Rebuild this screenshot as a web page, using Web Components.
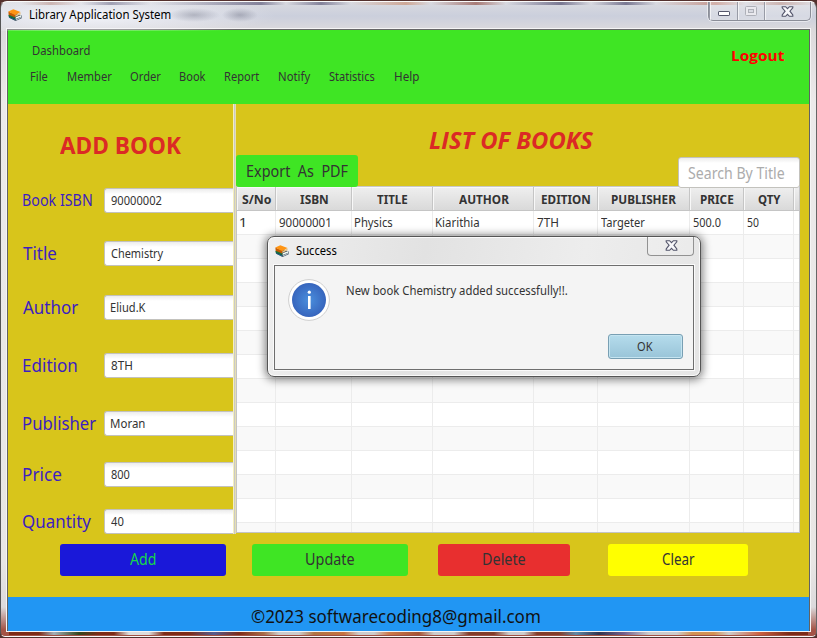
<!DOCTYPE html>
<html lang="en"><head><meta charset="utf-8"><title>Library Application System</title>
<style>
html,body{margin:0;width:817px;height:638px;overflow:hidden;background:#7b7068}
body{font-family:"Noto Sans","Open Sans",sans-serif;font-size:12px;color:#333}
</style></head><body><library-app></library-app>
<script>
const ctx=document.createElement('canvas').getContext('2d');
function define(name,html,init){
  customElements.define(name,class extends HTMLElement{
    connectedCallback(){
      if(this.shadowRoot)return;
      const r=this.attachShadow({mode:'open'});
      r.innerHTML=typeof html==='function'?html(this):html;
      if(init)init(this,r);
    }
  });
}
// Text whose ink spans exactly the width given in "w".
define('ui-text','<style>:host{display:block;flex:none;height:20px;line-height:20px;white-space:pre}span{display:inline-block;transform-origin:0 0;white-space:pre}</style><span></span>',(el,r)=>{
  const s=r.querySelector('span'),t=el.getAttribute('t'),w=+el.getAttribute('w'),z=el.getAttribute('s')||12;
  s.textContent=t;
  const bold=el.getAttribute('b')||400,it=el.hasAttribute('i')?'italic':'normal',f=el.getAttribute('f')||'"Noto Sans"';
  s.style.font=`${it} ${bold} ${z}px/20px ${f},sans-serif`;
  ctx.font=`${it} ${bold} ${z}px ${f},sans-serif`;
  const m=ctx.measureText(t),k=w/(m.actualBoundingBoxLeft+m.actualBoundingBoxRight);
  s.style.transform=`translateX(${m.actualBoundingBoxLeft*k}px) scaleX(${k})`;
  el.style.width=w+'px';
  if(el.hasAttribute('c'))el.style.color=el.getAttribute('c');
});
define('book-icon',`<style>:host{display:block;width:14px;height:12px;flex:none}svg{display:block}</style>
<svg width="14" height="12" viewBox="0.4 0 14 13.8" preserveAspectRatio="none"><path d="M1 7.2 7 4l7 3.6v3L8 13.7 1.5 10z" fill="#26384a"/><path d="M1 6.5 8 10v1.6L1 8.4z" fill="#197f36"/><path d="M8 9.4 13.6 7v1.8L8 11.6z" fill="#f4fbf4"/><path d="M1 8.8 7.6 12v1L1.4 9.9z" fill="#177b9b"/><path d="m8 12 5.8-3.1v1.2L8 13.4z" fill="#bfcbd0"/><path d="M.8 3 7.6 6.6v3.2L1 6.6z" fill="#c75b00"/><path d="m.7 2.9 5-2.7 7.2 3.2-5.2 3.7z" fill="#ff9412"/><path d="m7.7 7.2 5.2-3.4.2 2.2-5.4 3.3z" fill="#e8c48a"/></svg>`);
define('close-glyph',`<style>:host{display:block;flex:none;width:13px;height:11px}svg{display:block}</style>
<svg width="13" height="11" viewBox="0 0 13 11"><path d="M1.2 .7h3.4l1.9 2 1.9-2h3.4v1.2L8.9 5.2l2.9 3.7v1.4H8.4l-1.9-2-1.9 2H1.2V8.9l2.9-3.7-2.9-3.3z" fill="#f7f7fa" stroke="#52546a" stroke-width="1.1"/></svg>`);
define('window-controls',`<style>:host{display:grid;grid-template-columns:28px 27px 46px;height:18px;width:101px;box-sizing:content-box;border:1px solid #8b8e98;border-top:0;border-radius:0 0 5px 5px;background:#ffffff38;box-shadow:0 0 0 1px #ffffff80}
div{display:flex;align-items:center;justify-content:center;border-left:1px solid #989ba6;box-shadow:inset 1px 0 #ffffffa0}div:first-child{border:0}</style>
<div><svg width="12" height="5" style="margin-top:5px"><rect x=".5" y=".5" width="11" height="4" rx=".6" fill="#fff" stroke="#54566b"/></svg></div>
<div><svg width="12" height="10"><rect x=".5" y=".5" width="11" height="9" rx="1" fill="#e9e9ee" stroke="#aeb0b8"/><rect x="3.5" y="3.5" width="5" height="3" fill="#d8dae2" stroke="#aeb0b8"/></svg></div>
<div><close-glyph></close-glyph></div>`);
define('title-bar',`<style>:host{display:flex;box-sizing:border-box;height:29px;padding:0 5px 0 7px;position:relative}
book-icon{margin:7px 8px 0 0}ui-text{margin-top:3px}window-controls{margin:0 0 0 auto}</style>
<book-icon></book-icon><ui-text t="Library Application System" w="141" c="#000"></ui-text><window-controls></window-controls>`);
define('menu-header',`<style>:host{display:block;height:74px;background:#3fe524;box-sizing:border-box}
.top{display:flex;justify-content:space-between;height:36px;padding:11px 24px 0 25px}.log{margin-top:4px}
.menu{display:flex;padding-left:23px}</style>
<div class="top"><ui-text t="Dashboard" w="57"></ui-text><ui-text class="log" t="Logout" w="53" s="15" b="700" f="'Open Sans'" c="#f00"></ui-text></div>
<div class="menu"></div>`,(el,r)=>{
  let x=30;
  r.querySelector('.menu').innerHTML=[['File',30,17],['Member',66.5,44],['Order',129,31],['Book',178.5,26],['Report',223.5,35],['Notify',277.5,32],['Statistics',328,46],['Help',393.5,24]].map(([t,l,w])=>{const h=`<ui-text t="${t}" w="${w}" style="margin-left:${l-x}px;margin-top:-10px"></ui-text>`;x=l+w;return h}).join('');
});
define('form-field',el=>`<style>:host{display:flex;height:25px;box-sizing:border-box;padding-left:14.5px;align-items:center;overflow:hidden}
.l{width:81px;flex:none;margin-top:-2px}.in{box-sizing:border-box;height:25px;flex:1;border:1px solid #c3c2bd;border-right:0;border-radius:3px 0 0 3px;background:linear-gradient(#ececec,#fff 5px);padding:2px 0 0 6.5px}</style>
<div class="l"><ui-text t="${el.getAttribute('label')}" w="${el.getAttribute('lw')}" s="${el.getAttribute('ls')||18}" c="#3d1ec0"></ui-text></div>
<div class="in"><ui-text t="${el.getAttribute('value')}" w="${el.getAttribute('vw')}"></ui-text></div>`);
define('add-book-pane',`<style>:host{display:block;width:225px;height:430px;flex:none}.h{margin:29px 0 0 52px;padding-bottom:35px;height:20px}</style>
<div class="h"><ui-text t="ADD BOOK" w="121" s="22.5" b="700" f="'Open Sans'" c="#db2a25" style="padding-top:3px"></ui-text></div><div class="f"></div>`,(el,r)=>{
  r.querySelector('.f').innerHTML=[['Book ISBN',69,'90000002',51,0,15.5],['Title',33,'Chemistry',53,28],['Author',55,'Eliud.K',35,29],['Edition',54,'8TH',21,33],['Publisher',73,'Moran',34,33],['Price',38,'800',19,26],['Quantity',68,'40',13,22]].map(a=>`<form-field label="${a[0]}" lw="${a[1]}" value="${a[2]}" vw="${a[3]}" ls="${a[5]||17.5}" style="margin-top:${a[4]}px"></form-field>`).join('');
});
define('book-table',`<style>:host{display:block;box-sizing:border-box;width:564px;height:347px;border:1px solid #c4c4c4;border-top-color:#c8c8c8;overflow:hidden;background:#fff}
.r{display:grid;grid-template-columns:39px 76px 81px 101px 64px 92px 54px 50px 1fr;height:24px;box-sizing:border-box}
.r div{box-sizing:border-box;border-right:1px solid #ececec;border-bottom:1px solid #ececec;padding:2px 0 0 3px}
.r.o div{background:#f9f9f9}
.r.h div{background:linear-gradient(#efefef,#d9d9d9);border-color:#c5c5c5;box-shadow:inset 1px 1px #f8f8f8;display:flex;justify-content:center;padding:3px 0 0 1px}
.r div:last-child{border-right:0}</style>`,(el,r)=>{
  const H=[['S/No',29],['ISBN',28],['TITLE',31],['AUTHOR',50],['EDITION',48],['PUBLISHER',64],['PRICE',33],['QTY',23]];
  const D=[['1',5],['90000001',51],['Physics',38],['Kiarithia',43],['7TH',21],['Targeter',44],['500.0',28],['50',12]];
  const cells=(a,b)=>a.map(([t,w])=>`<div><ui-text t="${t}" w="${w}" ${b?'b="700"':''}></ui-text></div>`).join('')+'<div></div>';
  let h=`<div class="r h">${cells(H,1)}</div><div class="r">${cells(D)}</div>`;
  for(let i=0;i<13;i++)h+=`<div class="r ${i%2?'':'o'}">${'<div></div>'.repeat(9)}</div>`;
  r.innerHTML+=h;
});
define('book-list-pane',`<style>:host{display:block;width:564px;flex:none}
.t{height:51px;box-sizing:border-box;padding:24px 0 0 193px}.bar{height:31px;display:flex;justify-content:space-between;position:relative}
.e{box-sizing:border-box;width:122px;height:32px;background:#3fe524;border-radius:3px;padding:6px 0 0 10.5px}
.s{box-sizing:border-box;width:122px;height:31px;margin:2px 0 0 0;border:1px solid #c3c2bd;border-radius:3px;background:linear-gradient(#ececec,#fff 5px);padding:5px 0 0 9px}</style>
<div class="t"><ui-text t="LIST OF BOOKS" w="165" s="22.5" b="700" i f="'Open Sans'" c="#db2a25" style="padding-top:3px"></ui-text></div>
<div class="bar"><div class="e"><ui-text t="Export  As  PDF" w="101" s="15.5"></ui-text></div><div class="s"><ui-text t="Search By Title" w="96" s="15.5" c="#acacac"></ui-text></div></div><book-table></book-table>`);
define('action-button',el=>`<style>:host{display:flex;box-sizing:border-box;height:32px;justify-content:center;border-radius:3px;padding-top:5px;flex:none}</style><ui-text t="${el.getAttribute('t')}" w="${el.getAttribute('w')}" s="15.5"></ui-text>`);
define('success-dialog',`<style>:host{display:block;box-sizing:border-box;width:434px;height:141px;border:1px solid #555;border-radius:7px;background:linear-gradient(100deg,#efefef,#e2e2e2 35%,#ededed 70%,#e5e5e5);box-shadow:inset 0 0 0 1px #ffffffd0,0 1px 9px 2px #00000078}
.b{display:flex;height:28px;padding:0 6px 0 7px}.b book-icon{margin:8px 7px 0 0}.b ui-text{margin-top:4px}
.x{margin-left:auto;box-sizing:border-box;width:47px;height:19px;border:1px solid #929292;border-top:0;border-radius:0 0 4px 4px;display:flex;justify-content:center;padding:3px 0 0 1px;background:#ffffff30}
.c{box-sizing:border-box;margin:0 6px 0 6px;width:420px;height:105px;border:1px solid #6e6e6e;background:#f4f4f4;box-shadow:0 0 0 1px #fafafa;display:grid;grid-template-columns:71px 1fr;grid-template-rows:68px 1fr}
.i{padding:13px 0 0 13px}.m{padding-top:15px;margin-left:1px}.ok{grid-column:2;justify-self:end;margin-right:10px;width:75px;height:25px;box-sizing:border-box;border:1px solid #789fb3;border-radius:3px;background:linear-gradient(#b5dcec,#99c4d8);box-shadow:inset 0 0 0 1px #c5e4f0;display:flex;justify-content:center;padding:2px 1px 0 0}</style>
<div class="b"><book-icon></book-icon><ui-text t="Success" w="41" c="#000"></ui-text><div class="x"><close-glyph></close-glyph></div></div>
<div class="c"><div class="i"><svg width="42" height="42" viewBox="0 0 42 42"><defs><radialGradient id="g"><stop stop-color="#4a8fdd"/><stop offset="1" stop-color="#3765bd"/></radialGradient></defs><circle cx="21" cy="21" r="20.4" fill="#fff" stroke="#cfcfcf"/><circle cx="21" cy="21" r="17" fill="url(#g)"/><circle cx="21.3" cy="13.2" r="1.6" fill="#fff"/><rect x="20" y="17" width="2.6" height="13" fill="#fff"/></svg></div>
<div class="m"><ui-text t="New book Chemistry added successfully!!." w="220.5"></ui-text></div><div class="ok"><ui-text t="OK" w="16"></ui-text></div></div>`);
define('library-app',`<style>:host{display:block;position:relative;width:817px;height:638px;box-sizing:border-box;padding:1px 0 0 0;overflow:hidden;background:#54302d}
.win{box-sizing:border-box;width:817px;height:636px;border:1px solid #fafafa;border-left-color:#555;border-right-color:#666;border-radius:7px 7px 5px 5px;
background:linear-gradient(#d9dae0 0,#cbcfdc 14px,#dcdadc 29px,#eceaea 100px,#e8e6e4 560px,#dcdadc 605px,#a35245 628px)}
title-bar{background:linear-gradient(90deg,#0000 20px,#a4655560 50px,#0000 80px,#302c5560 110px,#0000 150px,#302c5580 260px,#0000 285px,#302c5580 320px,#0000 350px,#c7825f90 405px,#0000 430px,#8c4338a0 475px,#0000 505px,#302c5590 560px,#0000 590px,#302c5590 625px,#0000 655px,#b7685490 715px,#0000 745px,#a4655580 780px,#0000) 0 0/100% 3px no-repeat,radial-gradient(ellipse 26px 7px at 193px 13px,#85889880,#85889800),radial-gradient(ellipse 18px 7px at 239px 13px,#85889890,#85889800),radial-gradient(ellipse 190px 22px at 85px 14px,#f4f5fa,#f4f5fa00)}
.content{margin-left:6px;width:803px;height:602px;box-sizing:border-box;border:1px solid #626262;border-bottom-color:#444;border-top-color:#666;background:#d8c51b;box-shadow:0 0 0 1px #f5f5f5}
.main{display:flex;height:430px}.div{width:3px;box-sizing:border-box;border-left:1px solid #f5efbd;border-right:1px solid #e6dfb0;background:#c9c9c9;flex:none}
.acts{display:flex;height:63px;box-sizing:border-box;padding:10px 0 0 52px}.foot{height:34px;background:#2196f3;box-sizing:border-box;padding:9px 0 0 243px;overflow:hidden}
success-dialog{position:absolute;left:267px;top:236px}
.strip{height:3px;margin:1px 8px 0;background:linear-gradient(90deg,#7c2b17 30px,#a2b0b9 45px,#33451c 70px,#7c2b17 90px,#7c2b17 105px,#ddd 120px,#ddd 140px,#7c2b17 155px,#7c2b17 180px,#555d90 205px,#7c2b17 230px,#a86d49 255px,#ccc 270px,#ccc 290px,#b07443 305px,#c57240 335px,#ccc 350px,#ccc 365px,#cc7a4b 380px,#a35333 410px,#ccc 425px,#ccc 445px,#823d2a 460px,#823d2a 485px,#ccc 500px,#ccc 515px,#823d2a 528px,#823d2a 550px,#6089a7 567px,#31344e 590px,#725f8c 615px,#ccc 640px,#ccc 668px,#d29254 683px,#d29254 705px,#ccc 720px,#cc6242 750px,#7b2b19 780px)}
</style>
<div class="win"><title-bar></title-bar><div class="content" style="margin-top:-2px"><menu-header></menu-header>
<div class="main"><add-book-pane></add-book-pane><div class="div"></div><book-list-pane></book-list-pane></div>
<div class="acts"><action-button t="Add" w="26" style="width:166px;background:#1a18d9;color:#18d94a"></action-button><action-button t="Update" w="48" style="width:156px;margin-left:26px;background:#3fe524"></action-button><action-button t="Delete" w="42" style="width:132px;margin-left:30px;background:#e82f2f"></action-button><action-button t="Clear" w="33" style="width:140px;margin-left:38px;background:#ff0"></action-button></div>
<div class="foot"><ui-text t="©2023 softwarecoding8@gmail.com" w="289" s="18" c="#111"></ui-text></div></div><div class="strip"></div></div><success-dialog></success-dialog>`);
</script></body></html>
